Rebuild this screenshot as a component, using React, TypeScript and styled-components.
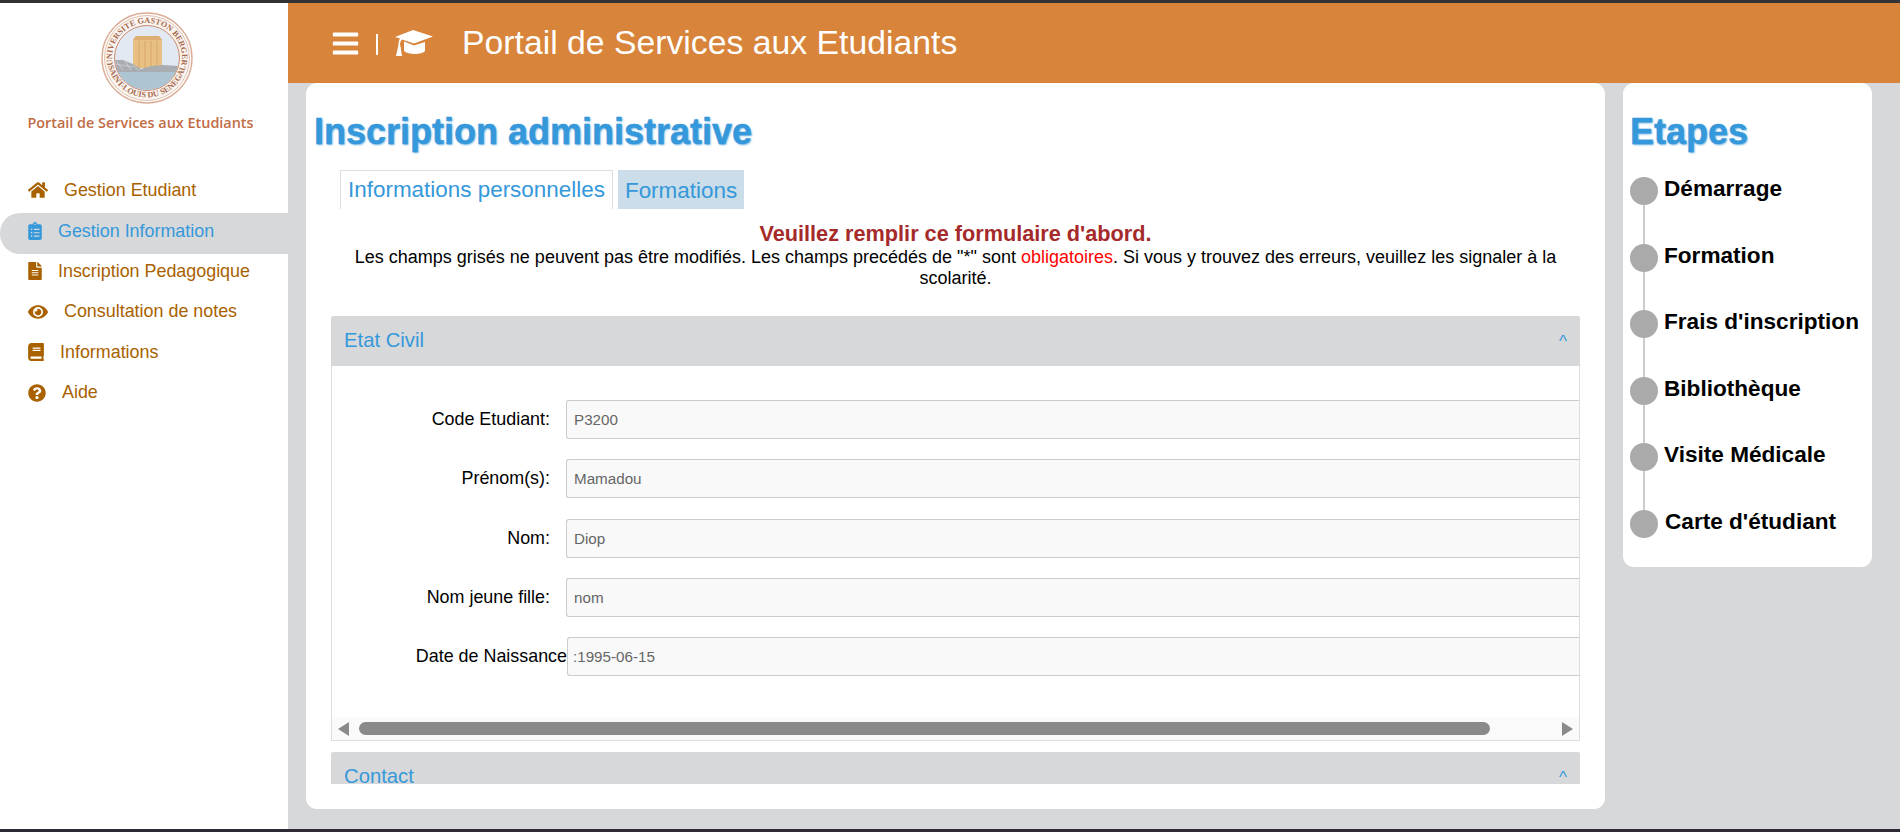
import React from "react";
import styled, { createGlobalStyle } from "styled-components";
import {
  FaHome,
  FaClipboardList,
  FaFileAlt,
  FaEye,
  FaBook,
  FaQuestionCircle,
  FaBars,
} from "react-icons/fa";

const GlobalStyle = createGlobalStyle`
  html, body { margin: 0; padding: 0; height: 100%; overflow: hidden; }
  body { font-family: "Liberation Sans", Arial, sans-serif; background: #d7d8da; }
  * { box-sizing: border-box; }
`;

const Page = styled.div`
  display: flex;
  height: 832px;
  border-top: 3px solid #333235;
  border-bottom: 3px solid #2e2a35;
  background: #d7d8da;
`;

const Sidebar = styled.aside`
  width: 288px;
  flex: none;
  background: #fff;
  display: flex;
  flex-direction: column;
`;

const Brand = styled.div`
  display: flex;
  flex-direction: column;
  align-items: center;
  padding-top: 9px;
  height: 167px;
`;

const LogoMark = styled.svg`
  margin-left: 5px;
  flex: none;
`;

const BrandName = styled.div`
  margin: 9px 7px 0 0;
  font-family: "Open Sans", "Noto Sans", sans-serif;
  font-weight: 600;
  font-size: 14.4px;
  color: #c26c45;
  white-space: nowrap;
`;

const Nav = styled.nav`
  display: flex;
  flex-direction: column;
`;

const NavItem = styled.div<{ $active?: boolean; $iconWidth: number }>`
  display: flex;
  align-items: center;
  gap: 16px;
  height: ${(p) => (p.$active ? "41px" : "40.5px")};
  margin: ${(p) => (p.$active ? "2.5px 0 -3px" : "0")};
  padding: ${(p) => (p.$active ? "0 0 5px 28px" : "0 0 0 28px")};
  font-size: 17.9px;
  color: ${(p) => (p.$active ? "#3498db" : "#a96100")};
  background: ${(p) => (p.$active ? "#d7d8da" : "transparent")};
  border-radius: ${(p) => (p.$active ? "20px 0 0 20px" : "0")};
  svg { width: ${(p) => p.$iconWidth}px; height: 18px; flex: none; }
`;

const Main = styled.div`
  flex: 1;
  min-width: 0;
  display: flex;
  flex-direction: column;
`;

const Header = styled.header`
  height: 80px;
  flex: none;
  background: #d8843b;
  color: #fff;
  display: flex;
  align-items: center;
  padding-left: 43px;
`;

const BarsIcon = styled(FaBars)`
  font-size: 29px;
`;

const HeaderRule = styled.span`
  width: 2px;
  height: 21px;
  background: #fff;
  margin: 2px 17px 0 16px;
`;

const HeaderTitle = styled.h1`
  margin: 0 0 2px 29px;
  font-weight: 400;
  font-size: 33.75px;
  white-space: nowrap;
`;

const Content = styled.div`
  flex: 1;
  min-height: 0;
  display: flex;
  align-items: flex-start;
  gap: 18px;
  padding-left: 18px;
`;

const Card = styled.section`
  background: #fff;
  border-radius: 11px;
`;

const MainCard = styled(Card)`
  width: 1299px;
  height: 726px;
  padding: 28px 25px 25px 8px;
  display: flex;
  flex-direction: column;
`;

const StepsCard = styled(Card)`
  width: 249px;
  height: 484px;
  padding: 28px 8px 0 7px;
`;

const PageTitle = styled.h2`
  margin: 0;
  font-size: 36px;
  line-height: 42px;
  font-weight: 700;
  color: #3498db;
  text-shadow: 1px 1px 2px #6fb3e2;
  -webkit-text-stroke: 0.4px #3498db;
  white-space: nowrap;
`;

const Tabs = styled.div`
  display: flex;
  gap: 5px;
  margin: 17px 0 0 26px;
`;

const Tab = styled.div<{ $active?: boolean }>`
  height: 39px;
  padding: ${(p) => (p.$active ? "0 7px" : "2px 7px 0")};
  display: flex;
  align-items: center;
  font-size: 22.45px;
  color: #3498db;
  white-space: nowrap;
  background: ${(p) => (p.$active ? "#fff" : "#cadde8")};
  border: ${(p) => (p.$active ? "1px solid #ddd" : "0")};
  border-bottom: 0;
`;

const Notice = styled.div`
  margin: 12px 0 0 17px;
  text-align: center;
  font-size: 18px;
  line-height: 21px;
  color: #000;
`;

const NoticeTitle = styled.div`
  font-size: 21.7px;
  font-weight: 700;
  line-height: 26px;
  color: #a52a2a;
`;

const Required = styled.span`
  color: #f00;
`;

const Accordion = styled.div`
  margin: 27px 0 0 17px;
  flex: 1;
  min-height: 0;
  overflow: hidden;
`;

const PanelHead = styled.div`
  display: flex;
  justify-content: space-between;
  height: 50px;
  flex: none;
  padding: 13px 13px 0 13px;
  background: #d7d8da;
  border-radius: 2px 2px 0 0;
  font-size: 20.3px;
  color: #3498db;
`;

const Caret = styled.span`
  font-size: 17px;
  line-height: 18px;
  padding-top: 4px;
`;

const PanelBody = styled.div`
  height: 375px;
  margin-bottom: 11px;
  border: 1px solid #ddd;
  border-top: 0;
  display: flex;
  flex-direction: column;
`;

const Fields = styled.div`
  flex: 1;
  padding-top: 34px;
  display: flex;
  flex-direction: column;
  gap: 20.3px;
`;

const Field = styled.div`
  display: flex;
  align-items: center;
  justify-content: flex-end;
  white-space: nowrap;
`;

const FieldLabel = styled.label<{ $flush?: boolean }>`
  flex: 1;
  text-align: right;
  font-size: 17.9px;
  color: #000;
  padding-right: ${(p) => (p.$flush ? "0" : "16px")};
`;

const FieldInput = styled.input<{ $flush?: boolean }>`
  width: ${(p) => (p.$flush ? "1013px" : "1014px")};
  height: 39px;
  padding: 0 8px 0 ${(p) => (p.$flush ? "5px" : "7px")};
  margin-right: -1px;
  background: #f9f9f9;
  border: 1px solid #ccc;
  border-right-color: #ddd;
  border-radius: 3px 0 0 3px;
  font-family: inherit;
  font-size: 15.2px;
  color: #666;
  outline: none;
`;

const ScrollBar = styled.div`
  height: 23px;
  flex: none;
  background: #fafafa;
  display: flex;
  align-items: center;
  padding: 0 6px;
`;

const Arrow = styled.span<{ $right?: boolean }>`
  flex: none;
  width: 0;
  height: 0;
  border-top: 7px solid transparent;
  border-bottom: 7px solid transparent;
  ${(p) => (p.$right ? "border-left: 11px solid #8a8a8a;" : "border-right: 11px solid #8a8a8a;")}
`;

const ScrollTrack = styled.div`
  flex: 1;
  height: 13px;
  padding: 0 72px 0 10px;
`;

const ScrollThumb = styled.div`
  height: 100%;
  background: #8a8a8a;
  border-radius: 7px;
`;

const StepsTitle = styled(PageTitle)``;

const StepList = styled.ol`
  list-style: none;
  margin: 24px 0 0;
  padding: 0;
`;

const Step = styled.li`
  position: relative;
  display: flex;
  align-items: flex-start;
  gap: 6px;
  height: 66.6px;
  font-size: 22.6px;
  font-weight: 700;
  color: #000;
  white-space: nowrap;
  &:not(:last-child)::after {
    content: "";
    position: absolute;
    left: 13px;
    top: 28px;
    bottom: 0;
    width: 2px;
    background: #ccc;
  }
`;

const StepDot = styled.span`
  width: 28px;
  height: 28px;
  flex: none;
  border-radius: 50%;
  background: #aaa;
`;

const StepLabel = styled.span<{ $nudge?: boolean }>`
  line-height: 24px;
  margin-left: ${(p) => (p.$nudge ? "1px" : "0")};
`;

const CapIcon = () => (
  <svg width="38" height="26" viewBox="0 0 38 26" fill="#fff" aria-hidden="true">
    <path d="M18 0 L38 6.5 L19 13.5 L7 9.5 C5.5 11 5 13 5 15 C6 17 6 20 7 26 L1 26 C2 21 3 17 3.5 15 C3.5 12 4 10 5 8.5 L0 7 Z" />
    <path d="M9 11.5 L19 15.5 L30 12 L30 21 C27 25 13 25 9 21 Z" />
  </svg>
);

const Logo = () => (
  <LogoMark width="92" height="92" viewBox="0 0 92 92" aria-label="Université Gaston Berger">
    <defs>
      <path id="arcTop" d="M46 81 A35 35 0 1 1 46.01 81" />
      <path id="arcBottom" d="M46 6.5 A39.5 39.5 0 1 0 46.01 6.5" />
      <clipPath id="seal">
        <circle cx="46" cy="46" r="32" />
      </clipPath>
    </defs>
    <circle cx="46" cy="46" r="45" fill="#fff" stroke="#dcae98" strokeWidth="1.4" />
    <circle cx="46" cy="46" r="42.5" fill="#fbf5f1" stroke="#cf9a80" strokeWidth="0.6" />
    <circle cx="46" cy="46" r="32.5" fill="#e2e9f3" stroke="#c98a6d" strokeWidth="1" />
    <g clipPath="url(#seal)">
      <polygon points="32,28 35,24 58,24 61,28 61,56 32,56" fill="#e8c083" />
      <polygon points="32,28 35,24 58,24 61,28" fill="#dcae72" />
      <path d="M38 29 V56 M44 29 V56 M50 29 V56 M56 29 V56" stroke="#d6a868" strokeWidth="1" />
      <polygon points="14,48 22,48 32,52 40,57 50,54 62,53 78,54 78,62 14,62" fill="#a9adb2" />
      <path d="M14 52 L32 55 M16 50 L22 58 M24 49 L30 58 M32 53 L38 59" stroke="#d4d7db" strokeWidth="0.7" />
      <rect x="12" y="60" width="68" height="20" fill="#adc4d2" />
    </g>
    <text fontFamily="Liberation Serif, serif" fontSize="8.2" fontWeight="700" fill="#a8684a">
      <textPath href="#arcTop" startOffset="50%" textAnchor="middle">UNIVERSITE GASTON BERGER</textPath>
    </text>
    <text fontFamily="Liberation Serif, serif" fontSize="8.2" fontWeight="700" fill="#a8684a">
      <textPath href="#arcBottom" startOffset="50%" textAnchor="middle">SAINT-LOUIS DU SENEGAL</textPath>
    </text>
  </LogoMark>
);

const navItems = [
  { label: "Gestion Etudiant", Icon: FaHome, iconWidth: 20 },
  { label: "Gestion Information", Icon: FaClipboardList, iconWidth: 14, active: true },
  { label: "Inscription Pedagogique", Icon: FaFileAlt, iconWidth: 14 },
  { label: "Consultation de notes", Icon: FaEye, iconWidth: 20 },
  { label: "Informations", Icon: FaBook, iconWidth: 16 },
  { label: "Aide", Icon: FaQuestionCircle, iconWidth: 18 },
];

const fields = [
  { label: "Code Etudiant:", value: "P3200" },
  { label: "Prénom(s):", value: "Mamadou" },
  { label: "Nom:", value: "Diop" },
  { label: "Nom jeune fille:", value: "nom" },
  { label: "Date de Naissance", value: ":1995-06-15", flush: true },
];

const steps = ["Démarrage", "Formation", "Frais d'inscription", "Bibliothèque", "Visite Médicale", "Carte d'étudiant"];

export default function App() {
  return (
    <>
      <GlobalStyle />
      <Page>
        <Sidebar>
          <Brand>
            <Logo />
            <BrandName>Portail de Services aux Etudiants</BrandName>
          </Brand>
          <Nav>
            {navItems.map(({ label, Icon, iconWidth, active }) => (
              <NavItem key={label} $active={active} $iconWidth={iconWidth}>
                <Icon />
                {label}
              </NavItem>
            ))}
          </Nav>
        </Sidebar>
        <Main>
          <Header>
            <BarsIcon />
            <HeaderRule />
            <CapIcon />
            <HeaderTitle>Portail de Services aux Etudiants</HeaderTitle>
          </Header>
          <Content>
            <MainCard>
              <PageTitle>Inscription administrative</PageTitle>
              <Tabs>
                <Tab $active>Informations personnelles</Tab>
                <Tab>Formations</Tab>
              </Tabs>
              <Notice>
                <NoticeTitle>Veuillez remplir ce formulaire d'abord.</NoticeTitle>
                Les champs grisés ne peuvent pas être modifiés. Les champs precédés de "*" sont{" "}
                <Required>obligatoires</Required>. Si vous y trouvez des erreurs, veuillez les signaler à la scolarité.
              </Notice>
              <Accordion>
                <PanelHead>
                  Etat Civil
                  <Caret>^</Caret>
                </PanelHead>
                <PanelBody>
                  <Fields>
                    {fields.map((f) => (
                      <Field key={f.label}>
                        <FieldLabel $flush={f.flush}>{f.label}</FieldLabel>
                        <FieldInput $flush={f.flush} readOnly value={f.value} />
                      </Field>
                    ))}
                  </Fields>
                  <ScrollBar>
                    <Arrow />
                    <ScrollTrack>
                      <ScrollThumb />
                    </ScrollTrack>
                    <Arrow $right />
                  </ScrollBar>
                </PanelBody>
                <PanelHead>
                  Contact
                  <Caret>^</Caret>
                </PanelHead>
              </Accordion>
            </MainCard>
            <StepsCard>
              <StepsTitle>Etapes</StepsTitle>
              <StepList>
                {steps.map((s, i) => (
                  <Step key={s}>
                    <StepDot />
                    <StepLabel $nudge={i === steps.length - 1}>{s}</StepLabel>
                  </Step>
                ))}
              </StepList>
            </StepsCard>
          </Content>
        </Main>
      </Page>
    </>
  );
}
